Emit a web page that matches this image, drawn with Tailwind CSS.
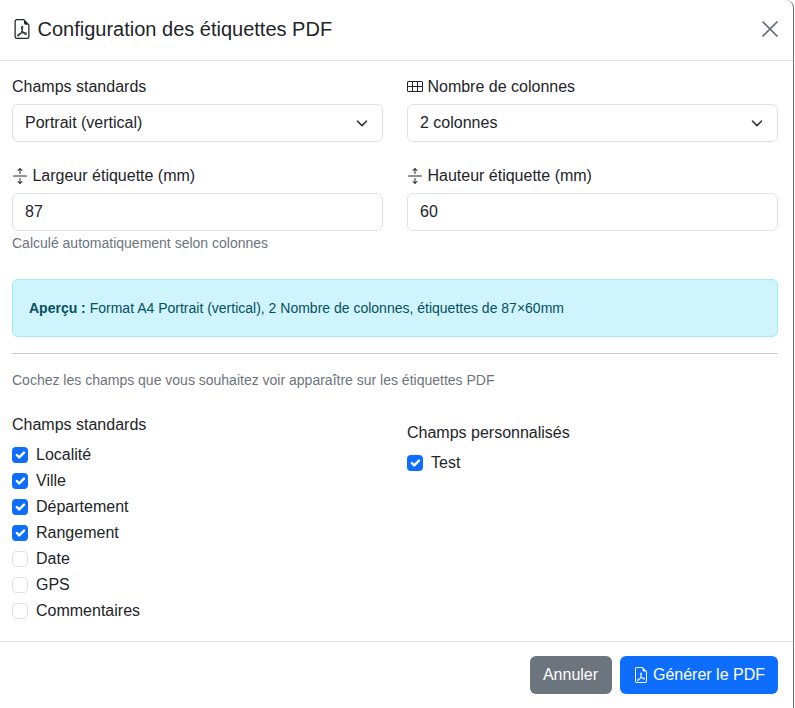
<!DOCTYPE html>
<html lang="fr">
<head>
<meta charset="utf-8">
<title>Configuration des étiquettes PDF</title>
<script src="https://cdn.jsdelivr.net/npm/@tailwindcss/browser@4"></script>
</head>
<body class="bg-white font-['Liberation_Sans',Arial,sans-serif] text-[#212529] text-base">
<div class="h-[708px] w-[795px] overflow-hidden">
  <div class="h-[708px] w-[794px] flex flex-col bg-white border-r border-[#6b6b6b] rounded-tr-[8px]">
    <header class="h-[61px] shrink-0 border-b border-[#dee2e6] flex items-center justify-between pl-[12px] pr-[15px] pb-[2px]">
      <h1 class="flex items-center text-[20px] leading-[24px]">
        <svg class="w-[20px] h-[20px] mr-[5.500px]" viewBox="0 0 16 16" fill="currentColor"><path d="M14 14V4.5L9.5 0H4a2 2 0 0 0-2 2v12a2 2 0 0 0 2 2h8a2 2 0 0 0 2-2zM9.5 3A1.5 1.5 0 0 0 11 4.5h2V14a1 1 0 0 1-1 1H4a1 1 0 0 1-1-1V2a1 1 0 0 1 1-1h5.5v2z"/><path d="M4.603 14.087a.81.81 0 0 1-.438-.42c-.195-.388-.13-.776.08-1.102.198-.307.526-.568.897-.787a7.68 7.68 0 0 1 1.482-.645 19.697 19.697 0 0 0 1.062-2.227 7.269 7.269 0 0 1-.43-1.295c-.086-.4-.119-.796-.046-1.136.075-.354.274-.672.65-.823.192-.077.4-.12.602-.077a.7.7 0 0 1 .477.365c.088.164.12.356.127.538.007.188-.012.396-.047.614-.084.51-.27 1.134-.52 1.794a10.954 10.954 0 0 0 .98 1.686 5.753 5.753 0 0 1 1.334.05c.364.066.734.195.96.465.12.144.193.32.2.518.007.192-.047.382-.138.563a1.04 1.04 0 0 1-.354.416.856.856 0 0 1-.51.138c-.331-.014-.654-.196-.933-.417a5.712 5.712 0 0 1-.911-.95 11.651 11.651 0 0 0-1.997.406 11.307 11.307 0 0 1-1.02 1.51c-.292.35-.609.656-.927.787a.793.793 0 0 1-.58.029zm1.379-1.901c-.166.076-.32.156-.459.238-.328.194-.541.383-.647.547-.094.145-.096.25-.04.361.01.022.02.036.026.044a.266.266 0 0 0 .035-.012c.137-.056.355-.235.635-.572a8.18 8.18 0 0 0 .45-.606zm1.64-1.33a12.71 12.71 0 0 1 1.01-.193 11.744 11.744 0 0 1-.51-.858 20.801 20.801 0 0 1-.5 1.05zm2.446.45c.15.163.296.3.435.41.24.19.407.253.498.256a.107.107 0 0 0 .07-.015.307.307 0 0 0 .094-.125.436.436 0 0 0 .059-.2.095.095 0 0 0-.026-.063c-.052-.062-.2-.152-.518-.209a3.876 3.876 0 0 0-.612-.053zM8.078 7.8a6.7 6.7 0 0 0 .2-.828c.031-.188.043-.343.038-.465a.613.613 0 0 0-.032-.198.517.517 0 0 0-.145.04c-.087.035-.158.106-.196.283-.04.192-.03.469.046.822.024.111.054.227.09.346z"/></svg>
        Configuration des étiquettes PDF
      </h1>
      <svg class="w-[16px] h-[16px] text-[#6c757d]" viewBox="0 0 16 16" fill="none" stroke="currentColor" stroke-width="1.8"><path d="M0.500 0.500l15 15M15.500 0.500l-15 15"/></svg>
    </header>

    <main class="flex-1 pl-[12px] pr-[15px]">
      <div class="grid grid-cols-2 gap-x-[24px] pt-[14px]">
        <div>
          <label class="block h-[24px] leading-[24px] mb-[5px]">Champs standards</label>
          <div class="h-[38px] border border-[#dee2e6] rounded-[6px] flex items-center justify-between pl-[12px] pr-[12px]">
            <span>Portrait (vertical)</span>
            <svg class="w-[16px] h-[16px]" viewBox="0 0 16 16" fill="none" stroke="#343a40" stroke-width="2" stroke-linecap="round" stroke-linejoin="round"><path d="M2 5l6 6 6-6" transform="translate(2 2.400) scale(.75)"/></svg>
          </div>
        </div>
        <div>
          <label class="flex items-center h-[24px] mb-[5px]">
            <svg class="w-[16px] h-[16px] mr-[4.450px]" viewBox="0 0 16 16" fill="currentColor"><path d="M0 3.500A1.500 1.500 0 0 1 1.500 2h13A1.500 1.500 0 0 1 16 3.500v8a1.500 1.500 0 0 1-1.500 1.500h-13A1.500 1.500 0 0 1 0 11.500v-8zM1.500 3a.5.5 0 0 0-.5.5V7h4V3H1.500zM5 8H1v3.500a.5.5 0 0 0 .5.5H5V8zm1 0v4h4V8H6zm4-1V3H6v4h4zm1 1v4h3.500a.5.5 0 0 0 .5-.5V8h-4zm0-1h4V3.500a.5.5 0 0 0-.5-.5H11v4z"/></svg>
            Nombre de colonnes
          </label>
          <div class="h-[38px] border border-[#dee2e6] rounded-[6px] flex items-center justify-between pl-[12px] pr-[12px]">
            <span>2 colonnes</span>
            <svg class="w-[16px] h-[16px]" viewBox="0 0 16 16" fill="none" stroke="#343a40" stroke-width="2" stroke-linecap="round" stroke-linejoin="round"><path d="M2 5l6 6 6-6" transform="translate(2 2.400) scale(.75)"/></svg>
          </div>
        </div>
        <div class="mt-[22px]">
          <label class="flex items-center h-[24px] mb-[5px]">
            <svg class="w-[16px] h-[16px] mr-[4.450px]" viewBox="0 0 16 16" fill="currentColor"><path fill-rule="evenodd" d="M1 8a.5.5 0 0 1 .5-.5h13a.5.5 0 0 1 0 1h-13A.5.5 0 0 1 1 8zM7.646.146a.5.5 0 0 1 .708 0l2 2a.5.5 0 0 1-.708.708L8.500 1.707V5.500a.5.5 0 0 1-1 0V1.707L6.354 2.854a.5.5 0 1 1-.708-.708l2-2zM8 10a.5.5 0 0 1 .5.5v3.793l1.146-1.147a.5.5 0 0 1 .708.708l-2 2a.5.5 0 0 1-.708 0l-2-2a.5.5 0 0 1 .708-.708L7.500 14.293V10.500A.5.5 0 0 1 8 10z"/></svg>
            Largeur étiquette (mm)
          </label>
          <div class="h-[38px] border border-[#dee2e6] rounded-[6px] flex items-center px-[12px]">87</div>
          <p class="mt-[2px] text-[14px] leading-[21px] text-[#6c757d]">Calculé automatiquement selon colonnes</p>
        </div>
        <div class="mt-[22px]">
          <label class="flex items-center h-[24px] mb-[5px]">
            <svg class="w-[16px] h-[16px] mr-[4.450px]" viewBox="0 0 16 16" fill="currentColor"><path fill-rule="evenodd" d="M1 8a.5.5 0 0 1 .5-.5h13a.5.5 0 0 1 0 1h-13A.5.5 0 0 1 1 8zM7.646.146a.5.5 0 0 1 .708 0l2 2a.5.5 0 0 1-.708.708L8.500 1.707V5.500a.5.5 0 0 1-1 0V1.707L6.354 2.854a.5.5 0 1 1-.708-.708l2-2zM8 10a.5.5 0 0 1 .5.5v3.793l1.146-1.147a.5.5 0 0 1 .708.708l-2 2a.5.5 0 0 1-.708 0l-2-2a.5.5 0 0 1 .708-.708L7.500 14.293V10.500A.5.5 0 0 1 8 10z"/></svg>
            Hauteur étiquette (mm)
          </label>
          <div class="h-[38px] border border-[#dee2e6] rounded-[6px] flex items-center px-[12px]">60</div>
        </div>
      </div>

      <div class="mt-[25px] h-[58px] rounded-[6px] border border-[#9eeaf9] bg-[#cff4fc] text-[#055160] text-[14px] flex items-center px-[16px]">
        <span><strong class="font-bold">Aperçu :</strong> Format A4 Portrait (vertical), 2 Nombre de colonnes, étiquettes de 87×60mm</span>
      </div>

      <hr class="mt-[16px] border-t border-[#c7c8c9]">

      <p class="mt-[16px] text-[14px] leading-[21px] text-[#6c757d]">Cochez les champs que vous souhaitez voir apparaître sur les étiquettes PDF</p>

      <div class="grid grid-cols-2 gap-x-[24px] mt-[22px]">
        <div>
          <h2 class="h-[24px] leading-[24px] mb-[5px]">Champs standards</h2>
          <div class="flex flex-col">
            <div class="flex items-center h-[26px]"><span class="w-[16px] h-[16px] rounded-[4px] bg-[#0d6efd] flex items-center justify-center mr-[8px]"><svg class="w-[16px] h-[16px]" viewBox="0 0 20 20" fill="none" stroke="#fff" stroke-width="3" stroke-linecap="round" stroke-linejoin="round"><path d="M6 10l3 3 6-6"/></svg></span>Localité</div>
            <div class="flex items-center h-[26px]"><span class="w-[16px] h-[16px] rounded-[4px] bg-[#0d6efd] flex items-center justify-center mr-[8px]"><svg class="w-[16px] h-[16px]" viewBox="0 0 20 20" fill="none" stroke="#fff" stroke-width="3" stroke-linecap="round" stroke-linejoin="round"><path d="M6 10l3 3 6-6"/></svg></span>Ville</div>
            <div class="flex items-center h-[26px]"><span class="w-[16px] h-[16px] rounded-[4px] bg-[#0d6efd] flex items-center justify-center mr-[8px]"><svg class="w-[16px] h-[16px]" viewBox="0 0 20 20" fill="none" stroke="#fff" stroke-width="3" stroke-linecap="round" stroke-linejoin="round"><path d="M6 10l3 3 6-6"/></svg></span>Département</div>
            <div class="flex items-center h-[26px]"><span class="w-[16px] h-[16px] rounded-[4px] bg-[#0d6efd] flex items-center justify-center mr-[8px]"><svg class="w-[16px] h-[16px]" viewBox="0 0 20 20" fill="none" stroke="#fff" stroke-width="3" stroke-linecap="round" stroke-linejoin="round"><path d="M6 10l3 3 6-6"/></svg></span>Rangement</div>
            <div class="flex items-center h-[26px]"><span class="w-[16px] h-[16px] rounded-[4px] border border-[#dee2e6] mr-[8px]"></span>Date</div>
            <div class="flex items-center h-[26px]"><span class="w-[16px] h-[16px] rounded-[4px] border border-[#dee2e6] mr-[8px]"></span>GPS</div>
            <div class="flex items-center h-[26px]"><span class="w-[16px] h-[16px] rounded-[4px] border border-[#dee2e6] mr-[8px]"></span>Commentaires</div>
          </div>
        </div>
        <div class="pt-[8px]">
          <h2 class="h-[24px] leading-[24px] mb-[5px]">Champs personnalisés</h2>
          <div class="flex items-center h-[26px]"><span class="w-[16px] h-[16px] rounded-[4px] bg-[#0d6efd] flex items-center justify-center mr-[8px]"><svg class="w-[16px] h-[16px]" viewBox="0 0 20 20" fill="none" stroke="#fff" stroke-width="3" stroke-linecap="round" stroke-linejoin="round"><path d="M6 10l3 3 6-6"/></svg></span>Test</div>
        </div>
      </div>
    </main>

    <footer class="h-[67px] shrink-0 border-t border-[#dee2e6] flex items-center justify-end gap-[8px] pr-[15px]">
      <button class="h-[38px] w-[82px] rounded-[6px] bg-[#6c757d] text-white">Annuler</button>
      <button class="h-[38px] px-[13px] rounded-[6px] bg-[#0d6efd] text-white flex items-center">
        <svg class="w-[16px] h-[16px] mr-[4.450px]" viewBox="0 0 16 16" fill="currentColor"><path d="M14 14V4.5L9.5 0H4a2 2 0 0 0-2 2v12a2 2 0 0 0 2 2h8a2 2 0 0 0 2-2zM9.5 3A1.5 1.5 0 0 0 11 4.5h2V14a1 1 0 0 1-1 1H4a1 1 0 0 1-1-1V2a1 1 0 0 1 1-1h5.5v2z"/><path d="M4.603 14.087a.81.81 0 0 1-.438-.42c-.195-.388-.13-.776.08-1.102.198-.307.526-.568.897-.787a7.68 7.68 0 0 1 1.482-.645 19.697 19.697 0 0 0 1.062-2.227 7.269 7.269 0 0 1-.43-1.295c-.086-.4-.119-.796-.046-1.136.075-.354.274-.672.65-.823.192-.077.4-.12.602-.077a.7.7 0 0 1 .477.365c.088.164.12.356.127.538.007.188-.012.396-.047.614-.084.51-.27 1.134-.52 1.794a10.954 10.954 0 0 0 .98 1.686 5.753 5.753 0 0 1 1.334.05c.364.066.734.195.96.465.12.144.193.32.2.518.007.192-.047.382-.138.563a1.04 1.04 0 0 1-.354.416.856.856 0 0 1-.51.138c-.331-.014-.654-.196-.933-.417a5.712 5.712 0 0 1-.911-.95 11.651 11.651 0 0 0-1.997.406 11.307 11.307 0 0 1-1.02 1.51c-.292.35-.609.656-.927.787a.793.793 0 0 1-.58.029zm1.379-1.901c-.166.076-.32.156-.459.238-.328.194-.541.383-.647.547-.094.145-.096.25-.04.361.01.022.02.036.026.044a.266.266 0 0 0 .035-.012c.137-.056.355-.235.635-.572a8.18 8.18 0 0 0 .45-.606zm1.64-1.33a12.71 12.71 0 0 1 1.01-.193 11.744 11.744 0 0 1-.51-.858 20.801 20.801 0 0 1-.5 1.05zm2.446.45c.15.163.296.3.435.41.24.19.407.253.498.256a.107.107 0 0 0 .07-.015.307.307 0 0 0 .094-.125.436.436 0 0 0 .059-.2.095.095 0 0 0-.026-.063c-.052-.062-.2-.152-.518-.209a3.876 3.876 0 0 0-.612-.053zM8.078 7.8a6.7 6.7 0 0 0 .2-.828c.031-.188.043-.343.038-.465a.613.613 0 0 0-.032-.198.517.517 0 0 0-.145.04c-.087.035-.158.106-.196.283-.04.192-.03.469.046.822.024.111.054.227.09.346z"/></svg>
        Générer le PDF
      </button>
    </footer>
  </div>
</div>
</body>
</html>
